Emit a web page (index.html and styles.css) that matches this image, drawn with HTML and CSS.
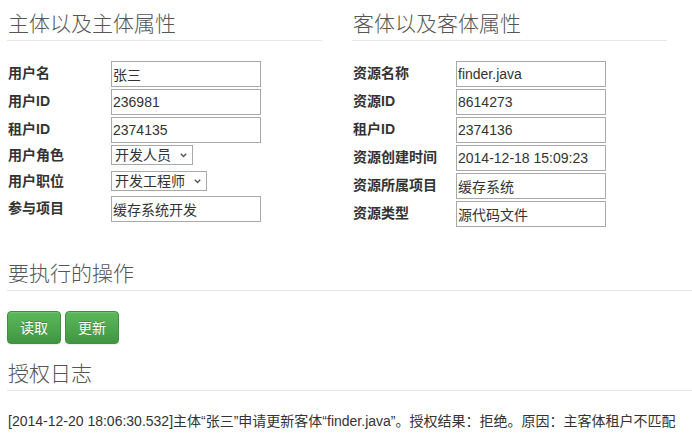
FILE: index.html
```html
<!DOCTYPE html>
<html lang="zh-CN">
<head>
<meta charset="utf-8">
<title>授权</title>
<link rel="stylesheet" href="styles.css">
</head>
<body>
<div class="page">
  <div class="attrs">
    <section class="panel">
      <h3 class="page-header">主体以及主体属性</h3>
      <div class="form form-subject">
        <label>用户名</label><input class="field" value="张三">
        <label>用户ID</label><input class="field" value="236981">
        <label>租户ID</label><input class="field" value="2374135">
        <label>用户角色</label>
        <span class="select-wrap"><select class="select sel-role"><option>开发人员</option></select><svg class="chev" width="7" height="5" viewBox="0 0 7 5"><path d="M0.8 0.8 L3.5 3.6 L6.2 0.8" fill="none" stroke="#555" stroke-width="1.4"/></svg></span>
        <label>用户职位</label>
        <span class="select-wrap"><select class="select sel-title"><option>开发工程师</option></select><svg class="chev" width="7" height="5" viewBox="0 0 7 5"><path d="M0.8 0.8 L3.5 3.6 L6.2 0.8" fill="none" stroke="#555" stroke-width="1.4"/></svg></span>
        <label>参与项目</label><input class="field" value="缓存系统开发">
      </div>
    </section>
    <section class="panel">
      <h3 class="page-header">客体以及客体属性</h3>
      <div class="form form-object">
        <label>资源名称</label><input class="field" value="finder.java">
        <label>资源ID</label><input class="field" value="8614273">
        <label>租户ID</label><input class="field" value="2374136">
        <label>资源创建时间</label><input class="field" value="2014-12-18 15:09:23">
        <label>资源所属项目</label><input class="field" value="缓存系统">
        <label>资源类型</label><input class="field" value="源代码文件">
      </div>
    </section>
  </div>

  <section class="ops">
    <h3 class="page-header">要执行的操作</h3>
    <div class="btns">
      <button class="btn">读取</button>
      <button class="btn">更新</button>
    </div>
  </section>

  <section class="log">
    <h3 class="page-header">授权日志</h3>
    <p class="log-line">[2014-12-20 18:06:30.532]主体“张三”申请更新客体“finder.java”。授权结果：拒绝。原因：主客体租户不匹配</p>
  </section>
</div>
</body>
</html>
```

FILE: styles.css
```css
html, body {
  margin: 0;
  padding: 0;
  background: #fff;
  overflow: hidden;
}
body {
  font-family: "Liberation Sans", "Noto Sans CJK SC", sans-serif;
  font-size: 14px;
  line-height: 20px;
  color: #333;
}
.page {
  padding-left: 7px;
}
.attrs {
  display: grid;
  grid-template-columns: 315px 315px;
  column-gap: 30px;
  padding-top: 12px;
}
.page-header {
  margin: 0;
  font-size: 21px;
  line-height: 24px;
  font-weight: 300;
  color: #555;
  padding: 0 0 4px 1px;
  border-bottom: 1px solid #e6e6e6;
}
.form {
  display: grid;
  grid-template-columns: 104px 150px;
  row-gap: 2px;
  margin-top: 20px;
  align-items: start;
  justify-items: start;
}
.form-subject {
  grid-template-rows: 26px 26px 26px 24px 23px 26px;
}
.form-object {
  grid-template-rows: repeat(6, 26px);
}
.form label {
  font-weight: 700;
  line-height: 20px;
  padding: 2px 0 0 1px;
  white-space: nowrap;
}
.form-subject label:nth-of-type(4),
.form-subject label:nth-of-type(5) {
  padding-top: 0;
}
.field {
  box-sizing: border-box;
  width: 150px;
  height: 26px;
  margin: 0;
  padding: 0 1px;
  border: 1px solid #a9a9a9;
  font-family: "Liberation Sans", "Noto Sans CJK SC", sans-serif;
  font-size: 14px;
  color: #333;
  background: #fff;
}
.select-wrap {
  position: relative;
  display: inline-block;
  height: 20px;
}
.select {
  appearance: none;
  -webkit-appearance: none;
  box-sizing: border-box;
  display: block;
  height: 20px;
  margin: 0;
  padding: 0 0 0 3px;
  border: 1px solid #a9a9a9;
  border-radius: 0;
  background: #fff;
  font-family: "Liberation Sans", "Noto Sans CJK SC", sans-serif;
  font-size: 14px;
  line-height: 18px;
  color: #333;
}
.sel-role { width: 82px; }
.sel-title { width: 96px; }
.chev {
  position: absolute;
  right: 6px;
  top: 8px;
  pointer-events: none;
}
.ops {
  margin-top: 35px;
}
.btns {
  display: flex;
  gap: 4px;
  margin-top: 20px;
}
.btn {
  box-sizing: border-box;
  height: 33px;
  padding: 0 12px;
  border: 1px solid #3e8f3e;
  border-radius: 4px;
  background-image: linear-gradient(to bottom, #5cb85c 0%, #419641 100%);
  box-shadow: inset 0 1px 0 rgba(255,255,255,.15), 0 1px 1px rgba(0,0,0,.075);
  color: #fff;
  text-shadow: 0 -1px 0 rgba(0,0,0,.2);
  font-family: "Liberation Sans", "Noto Sans CJK SC", sans-serif;
  font-size: 14px;
  line-height: 20px;
}
.log {
  margin-top: 18px;
}
.log-line {
  margin: 20px 0 0 1px;
  white-space: nowrap;
  overflow: hidden;
}
```
